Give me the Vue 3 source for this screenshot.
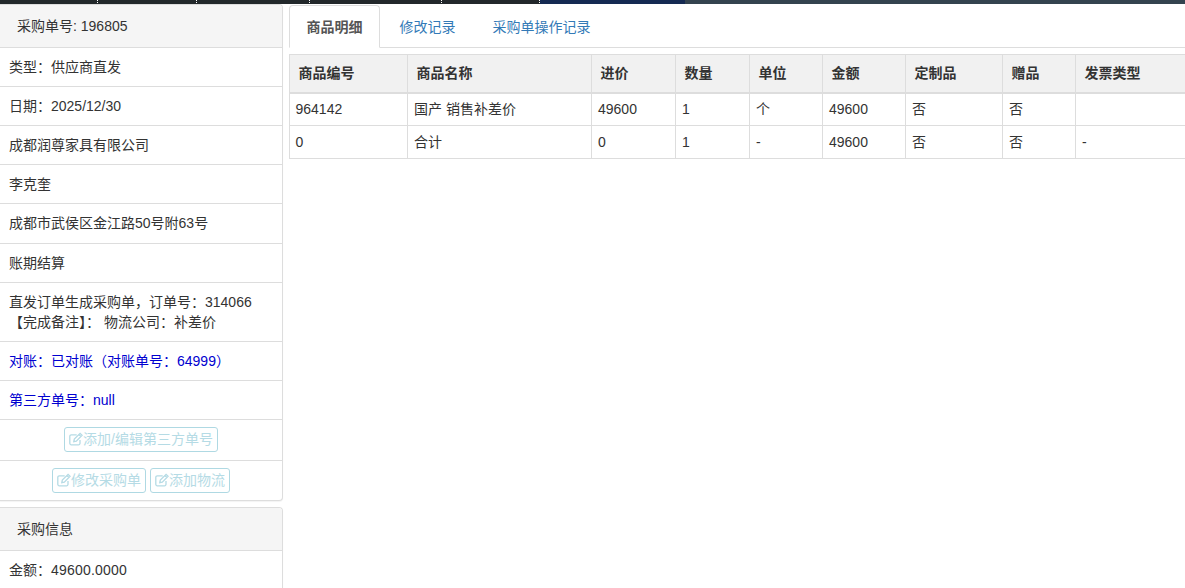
<script setup>
const ticks = [97, 196, 309, 441, 539]
const plainRows = [
  '类型：供应商直发',
  '日期：2025/12/30',
  '成都润尊家具有限公司',
  '李克奎',
  '成都市武侯区金江路50号附63号',
  '账期结算',
]
const columns = [
  { name: '商品编号', width: 118 },
  { name: '商品名称', width: 184 },
  { name: '进价', width: 84 },
  { name: '数量', width: 74 },
  { name: '单位', width: 73 },
  { name: '金额', width: 83 },
  { name: '定制品', width: 97 },
  { name: '赠品', width: 73 },
  { name: '发票类型', width: 140 },
]
const rows = [
  ['964142', '国产 销售补差价', '49600', '1', '个', '49600', '否', '否', ''],
  ['0', '合计', '0', '1', '-', '49600', '否', '否', '-'],
]
</script>

<template>
  <div class="page">
    <div class="topbar">
      <div class="seg-dark"></div>
      <div class="seg-navy"></div>
      <div class="seg-slate"></div>
      <i v-for="t in ticks" :key="t" class="tick" :style="{ left: t + 'px' }"></i>
    </div>
    <div class="main">
      <aside class="side">
        <section class="panel">
          <div class="panel-head first">采购单号: 196805</div>
          <div v-for="r in plainRows" :key="r" class="row">{{ r }}</div>
          <div class="row">直发订单生成采购单，订单号：314066<br />【完成备注】： 物流公司：补差价</div>
          <div class="row blue">对账：已对账（对账单号：64999）</div>
          <div class="row blue">第三方单号：null</div>
          <div class="row actions">
            <button class="btn" disabled>
              <svg class="ico" viewBox="0 0 14 14"><path d="M11 8v3.300a1.500 1.500 0 0 1-1.500 1.500H2.300a1.500 1.500 0 0 1-1.500-1.500V4.300a1.500 1.500 0 0 1 1.500-1.500h5.400" /><path d="M4.800 9.600l.5-2.600 5.800-5.700 2 2-5.800 5.800zM9.900 2.500l2 2" /></svg>添加/编辑第三方单号
            </button>
          </div>
          <div class="row actions last">
            <button class="btn" disabled>
              <svg class="ico" viewBox="0 0 14 14"><path d="M11 8v3.300a1.500 1.500 0 0 1-1.500 1.500H2.300a1.500 1.500 0 0 1-1.500-1.500V4.300a1.500 1.500 0 0 1 1.500-1.500h5.400" /><path d="M4.800 9.600l.5-2.600 5.800-5.700 2 2-5.800 5.800zM9.900 2.500l2 2" /></svg>修改采购单
            </button>
            <button class="btn" disabled>
              <svg class="ico" viewBox="0 0 14 14"><path d="M11 8v3.300a1.500 1.500 0 0 1-1.500 1.500H2.300a1.500 1.500 0 0 1-1.500-1.500V4.300a1.500 1.500 0 0 1 1.500-1.500h5.400" /><path d="M4.800 9.600l.5-2.600 5.800-5.700 2 2-5.800 5.800zM9.900 2.500l2 2" /></svg>添加物流
            </button>
          </div>
        </section>
        <section class="panel">
          <div class="panel-head">采购信息</div>
          <div class="row">金额：<span class="amount">49600.0000</span></div>
        </section>
      </aside>
      <div class="content">
        <nav class="tabs">
          <a class="tab active">商品明细</a>
          <a class="tab">修改记录</a>
          <a class="tab">采购单操作记录</a>
        </nav>
        <table class="grid">
          <colgroup>
            <col v-for="c in columns" :key="c.name" :style="{ width: c.width + 'px' }" />
          </colgroup>
          <thead>
            <tr><th v-for="c in columns" :key="c.name">{{ c.name }}</th></tr>
          </thead>
          <tbody>
            <tr v-for="row in rows" :key="row[0]">
              <td v-for="(cell, i) in row" :key="i">{{ cell }}</td>
            </tr>
          </tbody>
        </table>
      </div>
    </div>
  </div>
</template>

<style>
html, body { margin: 0; background: #fff; overflow: hidden; }
</style>

<style scoped>
.page {
  width: 1185px;
  height: 588px;
  overflow: hidden;
  position: relative;
  font-family: "Liberation Sans", "Noto Sans CJK SC", sans-serif;
  font-size: 14px;
  line-height: 20px;
  color: #333;
}
.topbar { display: flex; height: 4px; position: relative; }
.seg-dark { width: 540px; background: #22282b; }
.seg-navy { width: 145px; background: #152a52; }
.seg-slate { flex: 1; background: #34434f; }
.tick {
  position: absolute;
  top: 0;
  width: 1px;
  height: 4px;
  background: repeating-linear-gradient(#fff 0 1px, transparent 1px 2px);
}
.main { display: flex; align-items: flex-start; }
.side { width: 283px; flex: none; display: flex; flex-direction: column; gap: 6px; }
.panel {
  background: #fff;
  border: 1px solid #ddd;
  border-left: 0;
  border-radius: 0 4px 4px 0;
  box-shadow: 0 1px 1px rgba(0, 0, 0, .05);
}
.panel-head {
  background: #f5f5f5;
  padding: 11px 17px 11px;
  border-bottom: 1px solid #ddd;
  border-radius: 0 3px 0 0;
}
.panel-head.first { padding-bottom: 11.060px; }
.row {
  padding: 9.05px 9px;
  border-bottom: 1px solid #ddd;
}
.amount { letter-spacing: .2px; }
.blue { color: #0000d0; }
.actions {
  display: flex;
  justify-content: center;
  gap: 4px;
  padding: 7px 0 7.900px;
}
.last { border-bottom: 0; padding-bottom: 7px; }
.btn {
  display: inline-flex;
  align-items: center;
  height: 25px;
  box-sizing: border-box;
  padding: 0 4px;
  border: 1px solid #afd9e3;
  border-radius: 3px;
  background: #fff;
  color: #b5dbe5;
  font: inherit;
}
.ico {
  width: 14px;
  height: 14px;
  flex: none;
  fill: none;
  stroke: #b5dbe5;
  stroke-width: 1.3;
}
.content { flex: 1; min-width: 0; padding-left: 6px; padding-top: 1px; }
.tabs {
  display: flex;
  height: 43px;
  box-sizing: border-box;
  border-bottom: 1px solid #ddd;
}
.tab {
  padding: 11px 16.5px 0;
  margin-right: 2px;
  height: 43px;
  box-sizing: border-box;
  border: 1px solid transparent;
  border-radius: 4px 4px 0 0;
  color: #337ab7;
}
.tab.active {
  color: #555;
  font-weight: 700;
  background: #fff;
  border-color: #ddd;
  border-bottom-color: #fff;
}
.grid {
  margin-top: 6px;
  width: 926px;
  table-layout: fixed;
  border-collapse: collapse;
  border: 1px solid #ddd;
}
.grid th {
  box-sizing: border-box;
  height: 38px;
  padding: 0 8.500px;
  background: #f1f1f1;
  border: 1px solid #ddd;
  border-bottom: 2px solid #ddd;
  text-align: left;
  font-weight: 700;
}
.grid td {
  box-sizing: border-box;
  height: 33px;
  padding: 0 6px 1px;
  border: 1px solid #ddd;
}
.grid td:first-child { padding-left: 5.500px; }
</style>
